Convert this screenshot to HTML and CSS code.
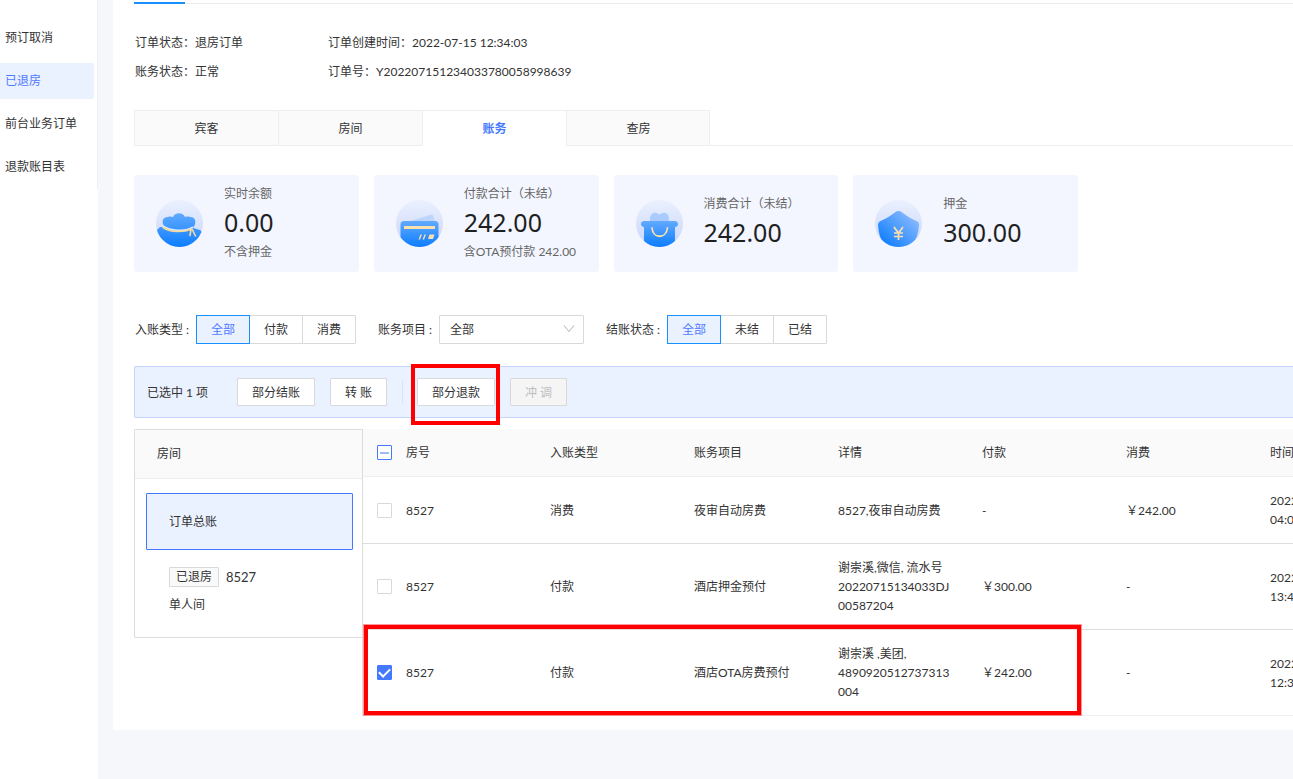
FILE: index.html
```html
<!DOCTYPE html>
<html lang="zh-CN">
<head>
<meta charset="utf-8">
<title>订单详情</title>
<link rel="stylesheet" href="styles.css">
</head>
<body>
<div class="layout">
  <nav class="sidebar">
    <div class="menu">
      <a class="menu-item" href="#">预订取消</a>
      <a class="menu-item active" href="#">已退房</a>
      <a class="menu-item" href="#">前台业务订单</a>
      <a class="menu-item" href="#">退款账目表</a>
    </div>
  </nav>
  <main class="panel">
    <div class="top-tabs"><span class="ink"></span></div>
    <div class="info">
      <div>订单状态：退房订单</div><div>订单创建时间：2022-07-15 12:34:03</div>
      <div>账务状态：正常</div><div>订单号：Y202207151234033780058998639</div>
    </div>
    <div class="tabs">
      <button class="tab" type="button">宾客</button>
      <button class="tab" type="button">房间</button>
      <button class="tab active" type="button">账务</button>
      <button class="tab" type="button">查房</button>
      <span class="tabs-rest"></span>
    </div>
    <section class="cards">
      <div class="card">
        <svg class="card-icon" viewBox="0 0 47 47">
          <defs>
            <linearGradient id="disc" x1="0" y1="0" x2="0" y2="1"><stop offset="0" stop-color="#eaf0fe"/><stop offset="1" stop-color="#c8d5fa"/></linearGradient>
            <linearGradient id="blue" x1="0" y1="0" x2="0" y2="1"><stop offset="0" stop-color="#62aaff"/><stop offset="1" stop-color="#0b7dff"/></linearGradient>
            <linearGradient id="shield" x1="1" y1="0" x2="0" y2="1"><stop offset="0.1" stop-color="#8fbcff"/><stop offset="0.9" stop-color="#0b7dff"/></linearGradient>
            <clipPath id="round"><circle cx="23.500" cy="23.500" r="23.500"/></clipPath>
          </defs>
          <circle cx="23.500" cy="23.500" r="23.500" fill="url(#disc)"/>
          <g clip-path="url(#round)">
            <path d="M9 27C5 23 6 17 12 17c2-1 4 0 5 0 2-5 10-5 12 0 3-1 5 0 6 0 6 1 5 7 2 11l7 2 3 3v14H0V31l4-4z" fill="url(#blue)"/>
            <path d="M7 26c8 5 22 6 30 1" fill="none" stroke="#d8e8ff" stroke-width="1.500"/>
            <path d="M7 27.500c8 5 20 5 29 1.500M35 29.500l-1 6M36 29l3.500 7" fill="none" stroke="#f6d99c" stroke-width="1.600" stroke-linecap="round"/>
          </g>
        </svg>
        <div class="card-text"><span>实时余额</span><strong>0.00</strong><span>不含押金</span></div>
      </div>
      <div class="card">
        <svg class="card-icon" viewBox="0 0 47 47">
          <circle cx="23.500" cy="23.500" r="23.500" fill="url(#disc)"/>
          <g clip-path="url(#round)">
            <path d="M11 22l23-7q3-1 3.500 2l1.500 6z" fill="#bcd5fd"/>
            <path d="M8 21h31q3.500 0 3.500 3.500V47h-38V24.500Q4.500 21 8 21z" fill="url(#blue)"/>
            <path d="M8 26h31v3H8z" fill="#fbe0ae"/>
            <path d="M24.500 34.500h1.500l-2 5h-1.500zM28.500 34.500H30l-2 5h-1.500zM33.500 34.500h5l-1.500 4.500h-5z" fill="#fbe0ae"/>
          </g>
        </svg>
        <div class="card-text"><span>付款合计（未结）</span><strong>242.00</strong><span>含OTA预付款 242.00</span></div>
      </div>
      <div class="card">
        <svg class="card-icon" viewBox="0 0 47 47">
          <circle cx="23.500" cy="23.500" r="23.500" fill="url(#disc)"/>
          <g clip-path="url(#round)">
            <path d="M14 23v-4c0-7 7-8 9.500-4 3-4 9.500-3 9.500 4v4z" fill="#a9cbfd"/>
            <path d="M8 21h31c4 0 4 6 0 6v14q0 2-2 6H10q-2-3-2-6V27c-4 0-4-6 0-6z" fill="url(#blue)"/>
            <path d="M16 28c1 11 14 11 15.500 0" fill="none" stroke="#fbe0ae" stroke-width="1.800" stroke-linecap="round"/>
          </g>
        </svg>
        <div class="card-text"><span>消费合计（未结）</span><strong>242.00</strong></div>
      </div>
      <div class="card">
        <svg class="card-icon" viewBox="0 0 47 47">
          <circle cx="23.500" cy="23.500" r="23.500" fill="url(#disc)"/>
          <g clip-path="url(#round)">
            <path d="M20.500 12q3-2 6 0c5 4 10 7 15 9q3 1 2.500 4-1 13-6 18-6 5-14.500 5T8.500 43Q4 38 3 25q0-3 2.500-4c5-2 10-5 15-9z" fill="url(#shield)"/>
            <path d="M19 27l4.500 6 4.500-6M23.500 33v7M19 33h9M19 36.500h9" fill="none" stroke="#fbe0ae" stroke-width="1.700"/>
          </g>
        </svg>
        <div class="card-text"><span>押金</span><strong>300.00</strong></div>
      </div>
    </section>
    <section class="filters">
      <span class="filter-label">入账类型 :</span>
      <div class="segment">
        <button class="seg active" type="button">全部</button><button class="seg" type="button">付款</button><button class="seg" type="button">消费</button>
      </div>
      <label class="filter-label" for="item">账务项目 :</label>
      <div class="select-wrap">
        <select class="select" id="item"><option>全部</option></select>
        <svg class="chevron" viewBox="0 0 12 12"><path d="M1 2.500l5 6 5-6" fill="none" stroke="#bfbfbf" stroke-width="1.100"/></svg>
      </div>
      <span class="filter-label">结账状态 :</span>
      <div class="segment">
        <button class="seg active" type="button">全部</button><button class="seg" type="button">未结</button><button class="seg" type="button">已结</button>
      </div>
    </section>
    <section class="actions">
      <span class="selected-count">已选中 1 项</span>
      <button class="btn wide" type="button">部分结账</button>
      <button class="btn" type="button">转 账</button>
      <span class="divider"></span>
      <span class="marked"><button class="btn wide" type="button">部分退款</button></span>
      <button class="btn" type="button" disabled>冲 调</button>
    </section>
    <section class="ledger">
      <aside class="rooms">
        <div class="rooms-head">房间</div>
        <button class="total" type="button">订单总账</button>
        <div class="room">
          <div class="room-line"><span class="tag">已退房</span><span class="room-no">8527</span></div>
          <div>单人间</div>
        </div>
      </aside>
      <div class="table-wrap">
        <table class="table">
          <colgroup><col class="col-check"><col><col><col><col><col><col><col></colgroup>
          <thead>
            <tr><th><input class="check partial" type="checkbox" aria-label="全选"></th><th>房号</th><th>入账类型</th><th>账务项目</th><th>详情</th><th>付款</th><th>消费</th><th>时间</th></tr>
          </thead>
          <tbody>
            <tr class="short"><td><input class="check" type="checkbox" aria-label="夜审自动房费"></td><td>8527</td><td>消费</td><td>夜审自动房费</td><td>8527,夜审自动房费</td><td>-</td><td>￥242.00</td><td>2022-07-16<br>04:00:00</td></tr>
            <tr><td><input class="check" type="checkbox" aria-label="酒店押金预付"></td><td>8527</td><td>付款</td><td>酒店押金预付</td><td>谢崇溪,微信, 流水号<br>20220715134033DJ<br>00587204</td><td>￥300.00</td><td>-</td><td>2022-07-15<br>13:40:33</td></tr>
            <tr class="marked-row"><td><input class="check" type="checkbox" checked aria-label="酒店OTA房费预付"><span class="row-frame"></span></td><td>8527</td><td>付款</td><td>酒店OTA房费预付</td><td>谢崇溪 ,美团,<br>4890920512737313<br>004</td><td>￥242.00</td><td>-</td><td>2022-07-15<br>12:34:03</td></tr>
          </tbody>
        </table>
      </div>
    </section>
  </main>
</div>
</body>
</html>
```

FILE: styles.css
```css
* { box-sizing: border-box; }

body {
  margin: 0;
  background: #f6f7fa;
  color: #333;
  font: 12px/19px Lato, "Noto Sans CJK SC", sans-serif;
  overflow: hidden;
}

button, select { font: inherit; color: inherit; }

.layout {
  display: flex;
  align-items: flex-start;
  min-height: 100vh;
}

.sidebar {
  flex: none;
  width: 98px;
  align-self: stretch;
  background: #fff;
}

.menu {
  display: flex;
  flex-direction: column;
  gap: 7px;
  padding: 20px 3px 4px 0;
  border-right: 1px solid #edeff3;
}

.menu-item {
  padding-left: 5px;
  line-height: 36px;
  color: #333;
  text-decoration: none;
}

.menu-item.active {
  background: #ebf2ff;
  color: #5079ff;
  border-radius: 0 2px 2px 0;
}

.panel {
  flex: 1;
  min-width: 0;
  margin-left: 15px;
  padding: 0 0 14px 21px;
  background: #fff;
}

.top-tabs {
  display: flex;
  height: 4px;
  align-items: flex-end;
  box-shadow: inset 0 -1px #ebebeb;
}

.ink { width: 51px; height: 2px; background: #1890ff; }

.info {
  display: grid;
  grid-template-columns: 193px 1fr;
  margin: 24px 0;
  padding-left: 1px;
  line-height: 29px;
}

.tabs { display: flex; height: 36px; }

.tab {
  width: 144px;
  padding: 0;
  background: #fafafa;
  border: 1px solid #eee;
  border-right: 0;
}

.tab.active {
  background: #fff;
  border-top-color: #eee;
  border-bottom-color: #fff;
  color: #4379ff;
  font-weight: bold;
}

.tabs-rest {
  flex: 1;
  margin-left: -1px;
  border-left: 1px solid #eee;
  border-bottom: 1px solid #eee;
}

.cards {
  display: grid;
  grid-template-columns: repeat(4, 1fr);
  gap: 15px;
  max-width: 944px;
  margin-top: 29px;
}

.card {
  display: flex;
  gap: 21px;
  height: 97px;
  padding: 4px 0 0 22px;
  background: #f3f6ff;
  border-radius: 3px;
}

.card-icon { flex: none; width: 47px; height: 47px; margin-top: 21px; }

.card-text {
  display: flex;
  flex-direction: column;
  color: #666;
  line-height: 29px;
  white-space: nowrap;
}

.card-text:not(:has(span + strong + span)) { padding-top: 10px; }

.card-text strong {
  color: #1f1f1f;
  font-family: "Noto Sans", sans-serif;
  font-size: 25px;
  font-weight: normal;
}

.filters { display: flex; align-items: center; margin-top: 43px; }

.filter-label { width: 62px; padding-left: 1px; }

.segment { display: flex; margin-right: 21px; }

.seg {
  width: 54px;
  height: 29px;
  margin-right: -1px;
  padding: 0;
  background: #fff;
  border: 1px solid #d9d9d9;
}

.seg:last-child { margin-right: 0; border-radius: 0 1px 1px 0; }

.seg.active {
  z-index: 1;
  background: #ebf2ff;
  border-color: #1890ff;
  color: #5079ff;
}

.select-wrap { position: relative; width: 145px; margin-right: 21px; }

.select {
  display: block;
  width: 100%;
  height: 29px;
  padding: 0 10px;
  appearance: none;
  background: #fff;
  border: 1px solid #d9d9d9;
  border-radius: 1px;
}

.chevron { position: absolute; right: 9px; top: 8px; width: 12px; height: 12px; }

.actions {
  display: flex;
  align-items: center;
  gap: 15px;
  height: 52px;
  margin-top: 22px;
  padding-left: 12px;
  background: #ebf2ff;
  border: 1px solid #c4d4fb;
  border-right: 0;
  border-radius: 2px 0 0 2px;
}

.selected-count { width: 75px; }

.btn {
  width: 57px;
  height: 28px;
  padding: 0;
  background: #fff;
  border: 1px solid #d9d9d9;
  border-radius: 1px;
}

.btn.wide { width: 78px; }

.btn:disabled { background: #f5f5f5; color: #bfbfbf; }

.divider { width: 1px; height: 22px; margin-right: -1px; background: #dbe1ee; }

.marked { position: relative; }

.marked::after {
  content: "";
  position: absolute;
  inset: -14px -5px -19px -6px;
  border: 4px solid #f00;
  outline: 1px solid rgba(255, 0, 0, 0.4);
  outline-offset: -1px;
}

.ledger { display: flex; align-items: flex-start; margin-top: 11px; }

.rooms {
  flex: none;
  width: 228px;
  height: 209px;
  border: 1px solid #ddd;
  border-right: 0;
  border-radius: 2px 0 0 2px;
}

.rooms-head {
  padding-left: 22px;
  background: #fafafa;
  border-bottom: 1px solid #eee;
  line-height: 48px;
}

.total {
  display: block;
  width: 207px;
  height: 57px;
  margin: 14px 0 0 11px;
  padding: 0 22px;
  background: #ebf2ff;
  border: 1px solid #4379ff;
  border-radius: 1px;
  text-align: left;
}

.room { padding: 17px 0 0 34px; line-height: 36px; }

.room-line { display: flex; align-items: center; gap: 7px; height: 20px; }

.tag {
  width: 50px;
  background: #fafafa;
  border: 1px solid #d9d9d9;
  border-radius: 1px;
  line-height: 18px;
  text-align: center;
}

.room-no { font-size: 13px; }

.table-wrap { flex: 1; min-width: 0; overflow: visible; border-left: 1px solid #ddd; }

.table {
  width: 1043px;
  table-layout: fixed;
  border-collapse: separate;
  border-spacing: 0;
}

.col-check { width: 35px; }

.table th {
  height: 48px;
  padding: 0 8px;
  background: #fafafa;
  border-bottom: 1px solid #eee;
  font-weight: normal;
  text-align: left;
}

.table td {
  height: 86px;
  padding: 0 8px;
  border-bottom: 1px solid #ddd;
}

.table .short td { height: 67px; }

.table tr:last-child td { border-bottom-color: #f0f0f0; }

.table th:first-child, .table td:first-child { padding: 0 0 0 14px; }

.check {
  display: grid;
  place-items: center;
  width: 15px;
  height: 15px;
  margin: 0;
  appearance: none;
  background: #fff;
  border: 1px solid #d9d9d9;
  border-radius: 1px;
}

.check.partial { border-color: #4379ff; }

.check.partial::after { content: ""; width: 9px; height: 2px; background: #9db9ff; }

.check:checked { background: #4379ff; border-color: #4379ff; }

.check:checked::after {
  content: "";
  width: 9px;
  height: 5px;
  margin-bottom: 2px;
  border: solid #fff;
  border-width: 0 0 2px 2px;
  transform: rotate(-45deg);
}

.marked-row { position: relative; }

.row-frame {
  position: absolute;
  top: -5px;
  left: 1px;
  width: 717px;
  height: 90px;
  border: 4px solid #f00;
  outline: 1px solid rgba(255, 0, 0, 0.4);
}
```
